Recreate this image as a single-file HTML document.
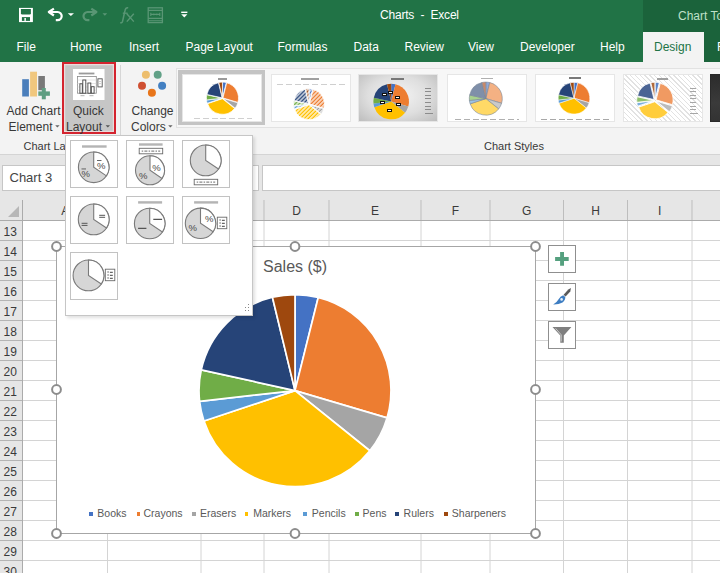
<!DOCTYPE html>
<html><head><meta charset="utf-8">
<style>
*{margin:0;padding:0;box-sizing:border-box}
html,body{width:720px;height:573px;overflow:hidden;background:#fff;font-family:"Liberation Sans",sans-serif}
.a{position:absolute}
.t{position:absolute;white-space:nowrap;line-height:1}
.tt{color:#fff;font-size:12px}
.rl{color:#383838;font-size:12px}
.hd{color:#3a3a3a;font-size:12px}
.lg{color:#595959;font-size:10.5px}
svg{position:absolute;overflow:visible}
</style></head><body>

<div class="a" style="left:0;top:0;width:720px;height:62px;background:#217346"></div>
<div class="a" style="left:643px;top:0;width:77px;height:62px;background:#1b633b"></div>
<div class="a" style="left:643px;top:32px;width:61px;height:30px;background:#f3f3f3"></div>
<div class="t tt" style="left:380px;top:9px;font-size:12px;letter-spacing:-0.2px">Charts&nbsp; -&nbsp; Excel</div>
<div class="t tt" style="left:678px;top:10px;color:#bfe0c9">Chart Tools</div>
<div class="t tt" style="left:16.5px;top:41px">File</div>
<div class="t tt" style="left:70px;top:41px">Home</div>
<div class="t tt" style="left:129px;top:41px">Insert</div>
<div class="t tt" style="left:185.5px;top:41px">Page Layout</div>
<div class="t tt" style="left:277.5px;top:41px">Formulas</div>
<div class="t tt" style="left:353.5px;top:41px">Data</div>
<div class="t tt" style="left:404.5px;top:41px">Review</div>
<div class="t tt" style="left:468px;top:41px">View</div>
<div class="t tt" style="left:520px;top:41px">Developer</div>
<div class="t tt" style="left:600px;top:41px">Help</div>
<div class="t tt" style="left:717px;top:41px">F</div>
<div class="t tt" style="left:654px;top:41px;color:#217346">Design</div>
<svg style="left:0;top:0" width="200" height="30">
<rect x="19" y="7.9" width="13.9" height="14.2" fill="#fff"/>
<path d="M20.9 9H30.9V13.2Q30.9 14.6 29.5 14.6H22.3Q20.9 14.6 20.9 13.2Z" fill="#217346"/>
<rect x="21.9" y="17.1" width="8.1" height="3.8" fill="#217346"/>
<rect x="24.4" y="18" width="1.5" height="2.9" fill="#fff"/>
<path d="M53.9 8.6 L48.8 12 L53.9 15.5" fill="none" stroke="#fff" stroke-width="2.2" stroke-linejoin="round"/>
<path d="M49.2 12 H57.6 A4.1 4.1 0 0 1 57.6 20.2 H55.8" fill="none" stroke="#fff" stroke-width="2.2"/>
<path d="M67.8 13.2H74L70.9 15.9Z" fill="#fff"/>
<g opacity="0.25">
<path d="M91.3 8.6 L96.4 12 L91.3 15.5" fill="none" stroke="#fff" stroke-width="2.2" stroke-linejoin="round"/>
<path d="M96 12 H87.6 A4.1 4.1 0 0 0 87.6 20.2 H89.4" fill="none" stroke="#fff" stroke-width="2.2"/>
<path d="M102.5 13.2H107.2L104.85 15.8Z" fill="#fff"/>
<path d="M128.2 7.8Q125.6 7.4 125 10.5L122.6 21.2Q122.1 23.2 120.2 22.6" fill="none" stroke="#fff" stroke-width="1.5"/>
<path d="M122.8 13.2H127.6" stroke="#fff" stroke-width="1.3"/>
<path d="M126.8 13.8L133.8 21.6M133.8 13.8L126.8 21.6" stroke="#fff" stroke-width="1.4"/>
<rect x="148.2" y="7.8" width="14.2" height="14.8" fill="none" stroke="#fff" stroke-width="1.3"/>
<path d="M148.2 10.4H162.4M148.2 18.4H162.4M148.2 20.7H162.4M150.8 14.4H159.8M150.8 12.8V16M159.8 12.8V16M153.8 13.6V15.2M156.8 13.6V15.2" stroke="#fff" stroke-width="1.1"/>
</g>
<rect x="181.2" y="11.6" width="6.2" height="1.4" fill="#fff"/>
<path d="M181.2 14.2H187.4L184.3 17.4Z" fill="#fff"/>
</svg>
<div class="a" style="left:0;top:62px;width:720px;height:92px;background:#f3f3f3"></div>
<div class="a" style="left:0;top:154px;width:720px;height:66px;background:#e6e6e6"></div>
<div class="a" style="left:120px;top:65px;width:1px;height:70px;background:#d6d6d6"></div>
<svg style="left:0;top:62px" width="60" height="40">
<rect x="22.2" y="17.2" width="6.7" height="17.3" fill="#4a7ebb"/>
<rect x="30.1" y="9.7" width="6.9" height="24.8" fill="#f0c77e"/>
<rect x="38.3" y="14" width="6.6" height="14.2" fill="#787878"/>
<rect x="41.8" y="26" width="4" height="11.3" fill="#5f9e82"/>
<rect x="38.3" y="29.4" width="11.6" height="4.4" fill="#5f9e82"/>
</svg>
<div class="t rl" style="left:6.5px;top:105px">Add Chart</div>
<div class="t rl" style="left:8.5px;top:121px">Element</div>
<div class="t rl" style="left:23.5px;top:141px;font-size:11px">Chart La</div>
<div class="a" style="left:62px;top:62px;width:54px;height:72px;background:#c6c6c6;border:2.7px solid #d4242f;box-shadow:inset 0 0 0 1.2px #e9dcdc"></div>
<svg style="left:72.5px;top:68.5px" width="31.5" height="31">
<rect x="0" y="0" width="31.5" height="31" fill="#fff"/>
<rect x="5.7" y="3.6" width="15.7" height="1.8" fill="#9a9a9a"/>
<rect x="4.5" y="7.5" width="18.8" height="16.7" fill="none" stroke="#8a8a8a" stroke-width="0.8"/>
<path d="M4.5 11H23.3M4.5 14.5H23.3M4.5 18H23.3M4.5 21.2H23.3" stroke="#d6d6d6" stroke-width="0.6"/>
<g fill="#fff" stroke="#444" stroke-width="0.9">
<rect x="6.9" y="14.8" width="2.4" height="9.4"/><rect x="9.8" y="11" width="3" height="13.2"/><rect x="14.9" y="14" width="2.9" height="10.2"/><rect x="18.3" y="17.7" width="2.8" height="6.5"/>
</g>
<rect x="24.9" y="9.8" width="4.3" height="8.1" fill="#fff" stroke="#555" stroke-width="0.9"/>
<path d="M27 12V12.8M27 14.3V15.1" stroke="#777" stroke-width="0.9"/>
<path d="M7.5 26.7H11.5M16.5 26.7H20.5" stroke="#aaa" stroke-width="0.9"/>
</svg>
<div class="t rl" style="left:73px;top:105px">Quick</div>
<div class="t rl" style="left:66px;top:121px">Layout</div>
<svg style="left:0;top:0" width="200" height="140">
<circle cx="145.9" cy="74.8" r="4" fill="#edbe6d"/>
<circle cx="157.7" cy="74.8" r="4" fill="#62a187"/>
<circle cx="142" cy="85.8" r="4" fill="#cf4f31"/>
<circle cx="162.1" cy="85.8" r="4" fill="#4380c2"/>
<circle cx="151.9" cy="92.7" r="4" fill="#e8751a"/>
</svg>
<div class="t rl" style="left:131.5px;top:105px">Change</div>
<div class="t rl" style="left:131px;top:121px">Colors</div>
<svg style="left:0;top:0" width="200" height="140"><path d="M55.2 125.2H59.6L57.4 127.6Z" fill="#666"/><path d="M105.6 125.2H110L107.8 127.6Z" fill="#555"/><path d="M168.2 125.2H172.6L170.4 127.6Z" fill="#666"/></svg>
<div class="t rl" style="left:484px;top:141px;font-size:11px">Chart Styles</div>
<div class="a" style="left:176px;top:67.5px;width:544px;height:60px;background:#f7f7f7;border:1px solid #e2e2e2;border-right:none"></div>
<div class="a" style="left:177.5px;top:70px;width:87px;height:55px;background:#c4c4c4"></div>
<div class="a" style="left:182px;top:73.5px;width:80px;height:48px;background:#fff;border:1px solid #e6e6e6"></div>
<svg style="left:0;top:0" width="720" height="140"><path d="M222.56,97.70L222.56,82.10A15.6,15.6 0 0 1 226.33,82.57Z" fill="#4472C4" stroke="#fff" stroke-width="0.7" stroke-linejoin="round"/><path d="M222.93,97.95L226.71,82.82A15.6,15.6 0 0 1 237.89,102.38Z" fill="#ED7D31" stroke="#fff" stroke-width="0.7" stroke-linejoin="round"/><path d="M222.94,98.43L237.90,102.86A15.6,15.6 0 0 1 235.10,108.21Z" fill="#A5A5A5" stroke="#fff" stroke-width="0.7" stroke-linejoin="round"/><path d="M222.41,98.69L234.57,108.47A15.6,15.6 0 0 1 207.62,103.64Z" fill="#FFC000" stroke="#fff" stroke-width="0.7" stroke-linejoin="round"/><path d="M222.01,98.31L207.22,103.26A15.6,15.6 0 0 1 206.51,100.05Z" fill="#5B9BD5" stroke="#fff" stroke-width="0.7" stroke-linejoin="round"/><path d="M222.00,98.17L206.50,99.91A15.6,15.6 0 0 1 206.77,94.80Z" fill="#70AD47" stroke="#fff" stroke-width="0.7" stroke-linejoin="round"/><path d="M222.14,97.85L206.91,94.47A15.6,15.6 0 0 1 218.47,82.69Z" fill="#264478" stroke="#fff" stroke-width="0.7" stroke-linejoin="round"/><path d="M222.44,97.70L218.77,82.54A15.6,15.6 0 0 1 222.44,82.10Z" fill="#9E480E" stroke="#fff" stroke-width="0.7" stroke-linejoin="round"/></svg>
<div class="a" style="left:194px;top:118.0px;width:58px;height:1px;background:repeating-linear-gradient(90deg,#d0d0d0 0 6px,transparent 6px 8.8px)"></div>
<div class="a" style="left:218px;top:77.5px;width:9px;height:2px;background:#9a9a9a"></div>
<div class="a" style="left:270.5px;top:73.5px;width:80px;height:48px;background:#fff;border:1px solid #e6e6e6"></div>
<svg style="left:0;top:0" width="720" height="140"><defs><pattern id="hp" width="2.8" height="2.8" patternUnits="userSpaceOnUse" patternTransform="rotate(45)"><rect width="1.5" height="2.8" fill="#fff"/></pattern></defs><path d="M309.06,103.70L309.06,88.70A15,15 0 0 1 312.69,89.15Z" fill="#4472C4" stroke="#fff" stroke-width="0.8" stroke-linejoin="round"/><path d="M309.43,103.95L313.06,89.40A15,15 0 0 1 323.82,108.21Z" fill="#ED7D31" stroke="#fff" stroke-width="0.8" stroke-linejoin="round"/><path d="M309.44,104.43L323.83,108.69A15,15 0 0 1 321.13,113.83Z" fill="#A5A5A5" stroke="#fff" stroke-width="0.8" stroke-linejoin="round"/><path d="M308.91,104.69L320.60,114.09A15,15 0 0 1 294.69,109.45Z" fill="#FFC000" stroke="#fff" stroke-width="0.8" stroke-linejoin="round"/><path d="M308.51,104.31L294.29,109.07A15,15 0 0 1 293.61,105.98Z" fill="#5B9BD5" stroke="#fff" stroke-width="0.8" stroke-linejoin="round"/><path d="M308.50,104.17L293.59,105.85A15,15 0 0 1 293.86,100.93Z" fill="#70AD47" stroke="#fff" stroke-width="0.8" stroke-linejoin="round"/><path d="M308.64,103.85L294.00,100.60A15,15 0 0 1 305.12,89.27Z" fill="#264478" stroke="#fff" stroke-width="0.8" stroke-linejoin="round"/><path d="M308.94,103.70L305.41,89.12A15,15 0 0 1 308.94,88.70Z" fill="#9E480E" stroke="#fff" stroke-width="0.8" stroke-linejoin="round"/><circle cx="309" cy="104.2" r="16" fill="url(#hp)" opacity="0.8"/></svg>
<div class="a" style="left:276.5px;top:83.5px;width:70.0px;height:1px;background:repeating-linear-gradient(90deg,#cfcfcf 0 6px,transparent 6px 8.8px)"></div>
<div class="a" style="left:301.0px;top:77.5px;width:18px;height:2px;background:#a0a0a0"></div>
<div class="a" style="left:358px;top:73.5px;width:80px;height:48px;background:radial-gradient(ellipse at 50% 45%,#f4f4f4 0%,#dedede 55%,#bdbdbd 100%);border:1px solid #e6e6e6"></div>
<svg style="left:0;top:0" width="720" height="140"><path d="M391.20,101.50L391.20,83.70A17.8,17.8 0 0 1 395.51,84.23Z" fill="#4472C4"/><path d="M391.20,101.50L395.51,84.23A17.8,17.8 0 0 1 408.27,106.56Z" fill="#ED7D31"/><path d="M391.20,101.50L408.27,106.56A17.8,17.8 0 0 1 405.07,112.65Z" fill="#A5A5A5"/><path d="M391.20,101.50L405.07,112.65A17.8,17.8 0 0 1 374.32,107.15Z" fill="#FFC000"/><path d="M391.20,101.50L374.32,107.15A17.8,17.8 0 0 1 373.51,103.48Z" fill="#5B9BD5"/><path d="M391.20,101.50L373.51,103.48A17.8,17.8 0 0 1 373.82,97.65Z" fill="#70AD47"/><path d="M391.20,101.50L373.82,97.65A17.8,17.8 0 0 1 387.01,84.20Z" fill="#264478"/><path d="M391.20,101.50L387.01,84.20A17.8,17.8 0 0 1 391.20,83.70Z" fill="#9E480E"/></svg>
<div class="a" style="left:425px;top:87.5px;width:6px;height:1px;background:#8c8c8c"></div>
<div class="a" style="left:425px;top:91.1px;width:6px;height:1px;background:#8c8c8c"></div>
<div class="a" style="left:425px;top:94.7px;width:6px;height:1px;background:#8c8c8c"></div>
<div class="a" style="left:425px;top:98.3px;width:6px;height:1px;background:#8c8c8c"></div>
<div class="a" style="left:425px;top:101.9px;width:6px;height:1px;background:#8c8c8c"></div>
<div class="a" style="left:425px;top:105.5px;width:6px;height:1px;background:#8c8c8c"></div>
<div class="a" style="left:425px;top:109.1px;width:6px;height:1px;background:#8c8c8c"></div>
<div class="a" style="left:425px;top:112.7px;width:8px;height:1px;background:#8c8c8c"></div>
<div class="a" style="left:381.5px;top:93.4px;width:5px;height:3px;background:#fff;border:0.7px solid #111"></div>
<div class="a" style="left:387.7px;top:90.9px;width:5px;height:3px;background:#fff;border:0.7px solid #111"></div>
<div class="a" style="left:395.2px;top:95.5px;width:5px;height:3px;background:#fff;border:0.7px solid #111"></div>
<div class="a" style="left:379.59999999999997px;top:100.9px;width:5px;height:3px;background:#fff;border:0.7px solid #111"></div>
<div class="a" style="left:395.9px;top:103.4px;width:5px;height:3px;background:#fff;border:0.7px solid #111"></div>
<div class="a" style="left:386.5px;top:109.0px;width:5px;height:3px;background:#fff;border:0.7px solid #111"></div>
<div class="a" style="left:391px;top:78.0px;width:13px;height:2px;background:#777"></div>
<div class="a" style="left:446.5px;top:73.5px;width:80px;height:48px;background:#fff;border:1px solid #e6e6e6"></div>
<svg style="left:0;top:0" width="720" height="140"><path d="M485.80,98.60L485.80,82.10A16.5,16.5 0 0 1 489.79,82.59Z" fill="#8fa9d9" stroke="#7a8797" stroke-width="0.6" stroke-linejoin="round"/><path d="M485.80,98.60L489.79,82.59A16.5,16.5 0 0 1 501.62,103.29Z" fill="#f4b183" stroke="#7a8797" stroke-width="0.6" stroke-linejoin="round"/><path d="M485.80,98.60L501.62,103.29A16.5,16.5 0 0 1 498.66,108.94Z" fill="#c9c9c9" stroke="#7a8797" stroke-width="0.6" stroke-linejoin="round"/><path d="M485.80,98.60L498.66,108.94A16.5,16.5 0 0 1 470.15,103.84Z" fill="#ffd966" stroke="#7a8797" stroke-width="0.6" stroke-linejoin="round"/><path d="M485.80,98.60L470.15,103.84A16.5,16.5 0 0 1 469.40,100.44Z" fill="#9dc3e6" stroke="#7a8797" stroke-width="0.6" stroke-linejoin="round"/><path d="M485.80,98.60L469.40,100.44A16.5,16.5 0 0 1 469.69,95.03Z" fill="#a9d18e" stroke="#7a8797" stroke-width="0.6" stroke-linejoin="round"/><path d="M485.80,98.60L469.69,95.03A16.5,16.5 0 0 1 481.92,82.56Z" fill="#7f8fa9" stroke="#7a8797" stroke-width="0.6" stroke-linejoin="round"/><path d="M485.80,98.60L481.92,82.56A16.5,16.5 0 0 1 485.80,82.10Z" fill="#c9896a" stroke="#7a8797" stroke-width="0.6" stroke-linejoin="round"/></svg>
<div class="a" style="left:454.5px;top:118.5px;width:64.0px;height:1.2px;background:repeating-linear-gradient(90deg,#b0b0b0 0 6px,transparent 6px 8.8px)"></div>
<div class="a" style="left:480.5px;top:77.5px;width:12px;height:1.8px;background:#b0b0b0"></div>
<div class="a" style="left:534.5px;top:73.5px;width:80px;height:48px;background:#fff;border:1px solid #e6e6e6"></div>
<svg style="left:0;top:0" width="720" height="140"><path d="M574.00,98.20L574.00,82.40A15.8,15.8 0 0 1 577.82,82.87Z" fill="#4472C4" stroke="#fff" stroke-width="0.5" stroke-linejoin="round"/><path d="M574.00,98.20L577.82,82.87A15.8,15.8 0 0 1 589.15,102.69Z" fill="#ED7D31" stroke="#fff" stroke-width="0.5" stroke-linejoin="round"/><path d="M574.00,98.20L589.15,102.69A15.8,15.8 0 0 1 586.31,108.10Z" fill="#A5A5A5" stroke="#fff" stroke-width="0.5" stroke-linejoin="round"/><path d="M574.00,98.20L586.31,108.10A15.8,15.8 0 0 1 559.02,103.21Z" fill="#FFC000" stroke="#fff" stroke-width="0.5" stroke-linejoin="round"/><path d="M574.00,98.20L559.02,103.21A15.8,15.8 0 0 1 558.30,99.96Z" fill="#5B9BD5" stroke="#fff" stroke-width="0.5" stroke-linejoin="round"/><path d="M574.00,98.20L558.30,99.96A15.8,15.8 0 0 1 558.57,94.78Z" fill="#70AD47" stroke="#fff" stroke-width="0.5" stroke-linejoin="round"/><path d="M574.00,98.20L558.57,94.78A15.8,15.8 0 0 1 570.28,82.84Z" fill="#264478" stroke="#fff" stroke-width="0.5" stroke-linejoin="round"/><path d="M574.00,98.20L570.28,82.84A15.8,15.8 0 0 1 574.00,82.40Z" fill="#9E480E" stroke="#fff" stroke-width="0.5" stroke-linejoin="round"/></svg>
<div class="a" style="left:540.5px;top:118.5px;width:70.0px;height:1px;background:repeating-linear-gradient(90deg,#a8a8a8 0 6px,transparent 6px 8.8px)"></div>
<div class="a" style="left:568.5px;top:77.0px;width:12px;height:2.2px;background:#7a7a7a"></div>
<div class="a" style="left:622.5px;top:73.5px;width:80px;height:48px;background:repeating-linear-gradient(45deg,#fff 0,#fff 2.4px,#e2e2e2 2.4px,#e2e2e2 3.4px);border:1px solid #e6e6e6"></div>
<svg style="left:0;top:0" width="720" height="140"><path d="M655.16,99.21L655.16,82.21A17,17 0 0 1 659.27,82.71Z" fill="#5d86c9" stroke="#fff" stroke-width="0.8" stroke-linejoin="round"/><path d="M656.13,99.85L660.24,83.36A17,17 0 0 1 672.43,104.68Z" fill="#f09a62" stroke="#fff" stroke-width="0.8" stroke-linejoin="round"/><path d="M656.15,101.10L672.45,105.93A17,17 0 0 1 669.40,111.76Z" fill="#bcbcbc" stroke="#fff" stroke-width="0.8" stroke-linejoin="round"/><path d="M654.77,101.78L668.02,112.43A17,17 0 0 1 638.65,107.17Z" fill="#ffcd3c" stroke="#fff" stroke-width="0.8" stroke-linejoin="round"/><path d="M653.73,100.78L637.61,106.17A17,17 0 0 1 636.84,102.68Z" fill="#7db0de" stroke="#fff" stroke-width="0.8" stroke-linejoin="round"/><path d="M653.70,100.43L636.81,102.33A17,17 0 0 1 637.10,96.75Z" fill="#8fc06b" stroke="#fff" stroke-width="0.8" stroke-linejoin="round"/><path d="M654.07,99.59L637.47,95.91A17,17 0 0 1 650.07,83.07Z" fill="#4b6494" stroke="#fff" stroke-width="0.8" stroke-linejoin="round"/><path d="M654.85,99.21L650.85,82.69A17,17 0 0 1 654.85,82.21Z" fill="#b06a3c" stroke="#fff" stroke-width="0.8" stroke-linejoin="round"/></svg>
<div class="a" style="left:689.5px;top:87.5px;width:6px;height:1px;background:#a6a6a6"></div>
<div class="a" style="left:689.5px;top:91.1px;width:6px;height:1px;background:#a6a6a6"></div>
<div class="a" style="left:689.5px;top:94.7px;width:6px;height:1px;background:#a6a6a6"></div>
<div class="a" style="left:689.5px;top:98.3px;width:6px;height:1px;background:#a6a6a6"></div>
<div class="a" style="left:689.5px;top:101.9px;width:6px;height:1px;background:#a6a6a6"></div>
<div class="a" style="left:689.5px;top:105.5px;width:6px;height:1px;background:#a6a6a6"></div>
<div class="a" style="left:689.5px;top:109.1px;width:6px;height:1px;background:#a6a6a6"></div>
<div class="a" style="left:689.5px;top:112.7px;width:8px;height:1px;background:#a6a6a6"></div>
<div class="a" style="left:656.5px;top:77.5px;width:11px;height:2px;background:#a0a0a0"></div>
<div class="a" style="left:709.5px;top:73.5px;width:80px;height:48px;background:linear-gradient(180deg,#2c2c2c,#3a3a3a 60%,#333);border:1px solid #2a2a2a"></div>
<div class="a" style="left:0;top:154px;width:720px;height:1px;background:#d4d4d4"></div>
<div class="a" style="left:2px;top:165px;width:257px;height:26px;background:#fff;border:1px solid #c6c6c6"></div>
<div class="t" style="left:9.5px;top:171px;font-size:13px;color:#444">Chart 3</div>
<div class="a" style="left:262px;top:165px;width:460px;height:26px;background:#fff;border:1px solid #c6c6c6"></div>
<div class="a" style="left:0;top:200px;width:720px;height:20px;background:#e6e6e6"></div>
<div class="a" style="left:0;top:220px;width:22px;height:353px;background:#e6e6e6"></div>
<div class="a" style="left:22px;top:200px;width:1px;height:373px;background:#ababab"></div>
<div class="a" style="left:0;top:220px;width:720px;height:1px;background:#ababab"></div>
<svg style="left:0;top:0" width="30" height="230"><path d="M19 206V217H8Z" fill="#b7b7b7"/></svg>
<svg style="left:0;top:0" width="720" height="573"><line x1="107.5" y1="221" x2="107.5" y2="573" stroke="#d4d4d4" stroke-width="1"/><line x1="107.5" y1="200" x2="107.5" y2="220" stroke="#bdbdbd" stroke-width="1"/><line x1="201" y1="221" x2="201" y2="573" stroke="#d4d4d4" stroke-width="1"/><line x1="201" y1="200" x2="201" y2="220" stroke="#bdbdbd" stroke-width="1"/><line x1="264" y1="221" x2="264" y2="573" stroke="#d4d4d4" stroke-width="1"/><line x1="264" y1="200" x2="264" y2="220" stroke="#bdbdbd" stroke-width="1"/><line x1="329" y1="221" x2="329" y2="573" stroke="#d4d4d4" stroke-width="1"/><line x1="329" y1="200" x2="329" y2="220" stroke="#bdbdbd" stroke-width="1"/><line x1="421" y1="221" x2="421" y2="573" stroke="#d4d4d4" stroke-width="1"/><line x1="421" y1="200" x2="421" y2="220" stroke="#bdbdbd" stroke-width="1"/><line x1="490" y1="221" x2="490" y2="573" stroke="#d4d4d4" stroke-width="1"/><line x1="490" y1="200" x2="490" y2="220" stroke="#bdbdbd" stroke-width="1"/><line x1="563.5" y1="221" x2="563.5" y2="573" stroke="#d4d4d4" stroke-width="1"/><line x1="563.5" y1="200" x2="563.5" y2="220" stroke="#bdbdbd" stroke-width="1"/><line x1="627.5" y1="221" x2="627.5" y2="573" stroke="#d4d4d4" stroke-width="1"/><line x1="627.5" y1="200" x2="627.5" y2="220" stroke="#bdbdbd" stroke-width="1"/><line x1="692" y1="221" x2="692" y2="573" stroke="#d4d4d4" stroke-width="1"/><line x1="692" y1="200" x2="692" y2="220" stroke="#bdbdbd" stroke-width="1"/><line x1="23" y1="240.5" x2="720" y2="240.5" stroke="#d4d4d4" stroke-width="1"/><line x1="0" y1="240.5" x2="22" y2="240.5" stroke="#b4b4b4" stroke-width="1"/><line x1="23" y1="260.5" x2="720" y2="260.5" stroke="#d4d4d4" stroke-width="1"/><line x1="0" y1="260.5" x2="22" y2="260.5" stroke="#b4b4b4" stroke-width="1"/><line x1="23" y1="280.5" x2="720" y2="280.5" stroke="#d4d4d4" stroke-width="1"/><line x1="0" y1="280.5" x2="22" y2="280.5" stroke="#b4b4b4" stroke-width="1"/><line x1="23" y1="300.5" x2="720" y2="300.5" stroke="#d4d4d4" stroke-width="1"/><line x1="0" y1="300.5" x2="22" y2="300.5" stroke="#b4b4b4" stroke-width="1"/><line x1="23" y1="320.5" x2="720" y2="320.5" stroke="#d4d4d4" stroke-width="1"/><line x1="0" y1="320.5" x2="22" y2="320.5" stroke="#b4b4b4" stroke-width="1"/><line x1="23" y1="340.5" x2="720" y2="340.5" stroke="#d4d4d4" stroke-width="1"/><line x1="0" y1="340.5" x2="22" y2="340.5" stroke="#b4b4b4" stroke-width="1"/><line x1="23" y1="360.5" x2="720" y2="360.5" stroke="#d4d4d4" stroke-width="1"/><line x1="0" y1="360.5" x2="22" y2="360.5" stroke="#b4b4b4" stroke-width="1"/><line x1="23" y1="380.5" x2="720" y2="380.5" stroke="#d4d4d4" stroke-width="1"/><line x1="0" y1="380.5" x2="22" y2="380.5" stroke="#b4b4b4" stroke-width="1"/><line x1="23" y1="400.5" x2="720" y2="400.5" stroke="#d4d4d4" stroke-width="1"/><line x1="0" y1="400.5" x2="22" y2="400.5" stroke="#b4b4b4" stroke-width="1"/><line x1="23" y1="420.5" x2="720" y2="420.5" stroke="#d4d4d4" stroke-width="1"/><line x1="0" y1="420.5" x2="22" y2="420.5" stroke="#b4b4b4" stroke-width="1"/><line x1="23" y1="440.5" x2="720" y2="440.5" stroke="#d4d4d4" stroke-width="1"/><line x1="0" y1="440.5" x2="22" y2="440.5" stroke="#b4b4b4" stroke-width="1"/><line x1="23" y1="460.5" x2="720" y2="460.5" stroke="#d4d4d4" stroke-width="1"/><line x1="0" y1="460.5" x2="22" y2="460.5" stroke="#b4b4b4" stroke-width="1"/><line x1="23" y1="480.5" x2="720" y2="480.5" stroke="#d4d4d4" stroke-width="1"/><line x1="0" y1="480.5" x2="22" y2="480.5" stroke="#b4b4b4" stroke-width="1"/><line x1="23" y1="500.5" x2="720" y2="500.5" stroke="#d4d4d4" stroke-width="1"/><line x1="0" y1="500.5" x2="22" y2="500.5" stroke="#b4b4b4" stroke-width="1"/><line x1="23" y1="520.5" x2="720" y2="520.5" stroke="#d4d4d4" stroke-width="1"/><line x1="0" y1="520.5" x2="22" y2="520.5" stroke="#b4b4b4" stroke-width="1"/><line x1="23" y1="540.5" x2="720" y2="540.5" stroke="#d4d4d4" stroke-width="1"/><line x1="0" y1="540.5" x2="22" y2="540.5" stroke="#b4b4b4" stroke-width="1"/><line x1="23" y1="560.5" x2="720" y2="560.5" stroke="#d4d4d4" stroke-width="1"/><line x1="0" y1="560.5" x2="22" y2="560.5" stroke="#b4b4b4" stroke-width="1"/></svg>
<div class="t hd" style="left:23px;width:84.5px;text-align:center;top:205px">A</div>
<div class="t hd" style="left:107.5px;width:93.5px;text-align:center;top:205px">B</div>
<div class="t hd" style="left:201px;width:63px;text-align:center;top:205px">C</div>
<div class="t hd" style="left:264px;width:65px;text-align:center;top:205px">D</div>
<div class="t hd" style="left:329px;width:92px;text-align:center;top:205px">E</div>
<div class="t hd" style="left:421px;width:69px;text-align:center;top:205px">F</div>
<div class="t hd" style="left:490px;width:73.5px;text-align:center;top:205px">G</div>
<div class="t hd" style="left:563.5px;width:64.0px;text-align:center;top:205px">H</div>
<div class="t hd" style="left:627.5px;width:64.5px;text-align:center;top:205px">I</div>
<div class="t hd" style="left:692px;width:68px;text-align:center;top:205px">J</div>
<div class="t hd" style="left:3.5px;top:226px">13</div>
<div class="t hd" style="left:3.5px;top:246px">14</div>
<div class="t hd" style="left:3.5px;top:266px">15</div>
<div class="t hd" style="left:3.5px;top:286px">16</div>
<div class="t hd" style="left:3.5px;top:306px">17</div>
<div class="t hd" style="left:3.5px;top:326px">18</div>
<div class="t hd" style="left:3.5px;top:346px">19</div>
<div class="t hd" style="left:3.5px;top:366px">20</div>
<div class="t hd" style="left:3.5px;top:386px">21</div>
<div class="t hd" style="left:3.5px;top:406px">22</div>
<div class="t hd" style="left:3.5px;top:426px">23</div>
<div class="t hd" style="left:3.5px;top:446px">24</div>
<div class="t hd" style="left:3.5px;top:466px">25</div>
<div class="t hd" style="left:3.5px;top:486px">26</div>
<div class="t hd" style="left:3.5px;top:506px">27</div>
<div class="t hd" style="left:3.5px;top:526px">28</div>
<div class="t hd" style="left:3.5px;top:546px">29</div>
<div class="t hd" style="left:3.5px;top:566px">30</div>
<div class="a" style="left:56px;top:246px;width:479.5px;height:287.5px;background:#fff;border:1px solid #a6a6a6"></div>
<div class="t" style="left:263px;top:259px;font-size:16px;color:#595959">Sales ($)</div>
<svg style="left:0;top:0" width="720" height="573"><path d="M295.00,390.60L295.00,294.60A96,96 0 0 1 318.22,297.45Z" fill="#4472C4" stroke="#fff" stroke-width="1.7" stroke-linejoin="round"/><path d="M295.00,390.60L318.22,297.45A96,96 0 0 1 387.05,417.87Z" fill="#ED7D31" stroke="#fff" stroke-width="1.7" stroke-linejoin="round"/><path d="M295.00,390.60L387.05,417.87A96,96 0 0 1 369.82,450.75Z" fill="#A5A5A5" stroke="#fff" stroke-width="1.7" stroke-linejoin="round"/><path d="M295.00,390.60L369.82,450.75A96,96 0 0 1 203.96,421.06Z" fill="#FFC000" stroke="#fff" stroke-width="1.7" stroke-linejoin="round"/><path d="M295.00,390.60L203.96,421.06A96,96 0 0 1 199.60,401.30Z" fill="#5B9BD5" stroke="#fff" stroke-width="1.7" stroke-linejoin="round"/><path d="M295.00,390.60L199.60,401.30A96,96 0 0 1 201.28,369.82Z" fill="#70AD47" stroke="#fff" stroke-width="1.7" stroke-linejoin="round"/><path d="M295.00,390.60L201.28,369.82A96,96 0 0 1 272.43,297.29Z" fill="#264478" stroke="#fff" stroke-width="1.7" stroke-linejoin="round"/><path d="M295.00,390.60L272.43,297.29A96,96 0 0 1 295.00,294.60Z" fill="#9E480E" stroke="#fff" stroke-width="1.7" stroke-linejoin="round"/></svg>
<div class="a" style="left:89.2px;top:512px;width:3.6px;height:3.6px;background:#4472C4"></div>
<div class="t lg" style="left:97.3px;top:507.5px">Books</div>
<div class="a" style="left:136.7px;top:512px;width:3.6px;height:3.6px;background:#ED7D31"></div>
<div class="t lg" style="left:143.5px;top:507.5px">Crayons</div>
<div class="a" style="left:192px;top:512px;width:3.6px;height:3.6px;background:#A5A5A5"></div>
<div class="t lg" style="left:200px;top:507.5px">Erasers</div>
<div class="a" style="left:244.7px;top:512px;width:3.6px;height:3.6px;background:#FFC000"></div>
<div class="t lg" style="left:253.2px;top:507.5px">Markers</div>
<div class="a" style="left:303.3px;top:512px;width:3.6px;height:3.6px;background:#5B9BD5"></div>
<div class="t lg" style="left:311.8px;top:507.5px">Pencils</div>
<div class="a" style="left:355px;top:512px;width:3.6px;height:3.6px;background:#70AD47"></div>
<div class="t lg" style="left:362.6px;top:507.5px">Pens</div>
<div class="a" style="left:395.3px;top:512px;width:3.6px;height:3.6px;background:#264478"></div>
<div class="t lg" style="left:403.6px;top:507.5px">Rulers</div>
<div class="a" style="left:444.2px;top:512px;width:3.6px;height:3.6px;background:#9E480E"></div>
<div class="t lg" style="left:451.8px;top:507.5px">Sharpeners</div>
<svg style="left:0;top:0" width="720" height="573"><circle cx="56.5" cy="246.5" r="4.4" fill="#fff" stroke="#8c8c8c" stroke-width="2"/><circle cx="295" cy="246.5" r="4.4" fill="#fff" stroke="#8c8c8c" stroke-width="2"/><circle cx="535.5" cy="246.5" r="4.4" fill="#fff" stroke="#8c8c8c" stroke-width="2"/><circle cx="56.5" cy="389.5" r="4.4" fill="#fff" stroke="#8c8c8c" stroke-width="2"/><circle cx="535.5" cy="389.5" r="4.4" fill="#fff" stroke="#8c8c8c" stroke-width="2"/><circle cx="56.5" cy="533.5" r="4.4" fill="#fff" stroke="#8c8c8c" stroke-width="2"/><circle cx="295" cy="533.5" r="4.4" fill="#fff" stroke="#8c8c8c" stroke-width="2"/><circle cx="535.5" cy="533.5" r="4.4" fill="#fff" stroke="#8c8c8c" stroke-width="2"/></svg>
<div class="a" style="left:548px;top:245px;width:27.5px;height:27.5px;background:#fff;border:1px solid #8f8f8f"></div>
<div class="a" style="left:548px;top:283px;width:27.5px;height:27.5px;background:#fff;border:1px solid #8f8f8f"></div>
<div class="a" style="left:548px;top:321px;width:27.5px;height:27.5px;background:#fff;border:1px solid #8f8f8f"></div>
<svg style="left:548px;top:245px" width="28" height="110">
<path d="M12.1 7.1h3.9v5h4.7v3.9h-4.7v4.7h-3.9v-4.7h-5v-3.9h5z" fill="#55a07f"/>
<path d="M22.9 43.1 L22.3 46.5 L17.6 51.6 L15.6 49.8 L20.3 44.6Z" fill="#5a5a5a"/>
<path d="M15.2 50.2 L17.3 52.1 Q17.5 55.5 14.5 57.5 Q10.5 59.8 5.2 59.6 Q8.8 57.6 10.4 54.6 Q12.3 50.8 15.2 50.2Z" fill="#3d7dc2"/>
<circle cx="13.6" cy="54.4" r="1.3" fill="#e8f0f8"/>
<path d="M4.5 82.1H23.4L15.8 90.6V97.8H12.3V90.6Z" fill="#7f7f7f"/>
<path d="M7.6 83.4L13.2 89.8V96.5" fill="none" stroke="#d0d0d0" stroke-width="0.9"/>
</svg>
<div class="a" style="left:64.5px;top:134.5px;width:188px;height:181px;background:#fff;border:1px solid #c6c6c6;box-shadow:2px 2px 3px rgba(0,0,0,0.12)"></div>
<div class="a" style="left:70px;top:140px;width:48px;height:47.5px;background:#fff;border:1px solid #c2c2c2"></div>
<div class="a" style="left:126px;top:140px;width:48px;height:47.5px;background:#fff;border:1px solid #c2c2c2"></div>
<div class="a" style="left:182px;top:140px;width:48px;height:47.5px;background:#fff;border:1px solid #c2c2c2"></div>
<div class="a" style="left:70px;top:196px;width:48px;height:47.5px;background:#fff;border:1px solid #c2c2c2"></div>
<div class="a" style="left:126px;top:196px;width:48px;height:47.5px;background:#fff;border:1px solid #c2c2c2"></div>
<div class="a" style="left:182px;top:196px;width:48px;height:47.5px;background:#fff;border:1px solid #c2c2c2"></div>
<div class="a" style="left:70px;top:252px;width:48px;height:47.5px;background:#fff;border:1px solid #c2c2c2"></div>
<svg style="left:0;top:0" width="720" height="573"><rect x="82" y="145.3" width="24.6" height="2.4" fill="#b4b4b4"/><circle cx="93.7" cy="167.3" r="15.3" fill="#d6d6d6" stroke="#7a7a7a" stroke-width="1.1"/><path d="M93.7,167.3V152.0A15.3,15.3 0 0 1 106.38,175.86Z" fill="#fff" stroke="#7a7a7a" stroke-width="1.1"/><text x="97" y="168.5" font-size="9.5" fill="#4a4a4a" font-family="Liberation Sans">%</text><rect x="97" y="160.0" width="4.5" height="0.9" fill="#555"/><text x="81.5" y="177" font-size="9.5" fill="#4a4a4a" font-family="Liberation Sans">%</text><rect x="81.5" y="168.5" width="4.5" height="0.9" fill="#555"/><rect x="139" y="143.3" width="23.6" height="2.4" fill="#b4b4b4"/><rect x="139.2" y="148.3" width="23.5" height="5.5" fill="#fff" stroke="#6a6a6a" stroke-width="0.9"/><path d="M141.7 151.05H160.2" stroke="#888" stroke-width="1.3" stroke-dasharray="1.5 1.2 3 1.2"/><circle cx="150" cy="170.3" r="14.5" fill="#d6d6d6" stroke="#7a7a7a" stroke-width="1.1"/><path d="M150,170.3V155.8A14.5,14.5 0 0 1 162.02,178.41Z" fill="#fff" stroke="#7a7a7a" stroke-width="1.1"/><text x="152.3" y="170.5" font-size="9.5" fill="#4a4a4a" font-family="Liberation Sans">%</text><text x="139" y="178.5" font-size="9.5" fill="#4a4a4a" font-family="Liberation Sans">%</text><circle cx="205.7" cy="160.4" r="15.4" fill="#d6d6d6" stroke="#7a7a7a" stroke-width="1.1"/><path d="M205.7,160.4V145.0A15.4,15.4 0 0 1 218.47,169.01Z" fill="#fff" stroke="#7a7a7a" stroke-width="1.1"/><rect x="194.2" y="179.3" width="23.5" height="5.5" fill="#fff" stroke="#6a6a6a" stroke-width="0.9"/><path d="M196.7 182.05H215.2" stroke="#888" stroke-width="1.3" stroke-dasharray="1.5 1.2 3 1.2"/><circle cx="93.7" cy="219.4" r="15.4" fill="#d6d6d6" stroke="#7a7a7a" stroke-width="1.1"/><path d="M93.7,219.4V204.0A15.4,15.4 0 0 1 106.47,228.01Z" fill="#fff" stroke="#7a7a7a" stroke-width="1.1"/><path d="M99.2 215.3H105.1M99.2 217.3H105.1M81.6 223.3H87.5M81.6 225.4H87.5" stroke="#555" stroke-width="1"/><rect x="138.1" y="201.2" width="24" height="2.4" fill="#b4b4b4"/><circle cx="149.7" cy="223.5" r="15.3" fill="#d6d6d6" stroke="#7a7a7a" stroke-width="1.1"/><path d="M149.7,223.5V208.2A15.3,15.3 0 0 1 162.38,232.06Z" fill="#fff" stroke="#7a7a7a" stroke-width="1.1"/><path d="M153.3 219.4H162.1M138.1 228.4H146.4" stroke="#555" stroke-width="1.1"/><rect x="194.1" y="201.2" width="24" height="2.4" fill="#b4b4b4"/><circle cx="200.5" cy="223.3" r="15.2" fill="#d6d6d6" stroke="#7a7a7a" stroke-width="1.1"/><path d="M200.5,223.3V208.10000000000002A15.2,15.2 0 0 1 213.10,231.80Z" fill="#fff" stroke="#7a7a7a" stroke-width="1.1"/><text x="205" y="221.8" font-size="9.5" fill="#4a4a4a" font-family="Liberation Sans">%</text><text x="188.5" y="231" font-size="9.5" fill="#4a4a4a" font-family="Liberation Sans">%</text><rect x="217.3" y="217.2" width="9.5" height="11.5" fill="#fff" stroke="#6a6a6a" stroke-width="0.9"/><path d="M219.3 220.0H220.9M221.9 220.39999999999998H224.8M219.3 223.0H220.9M221.9 223.39999999999998H224.8M219.3 226.0H220.9M221.9 226.39999999999998H224.8" stroke="#666" stroke-width="1.1"/><circle cx="88.5" cy="275.4" r="15.4" fill="#d6d6d6" stroke="#7a7a7a" stroke-width="1.1"/><path d="M88.5,275.4V260.0A15.4,15.4 0 0 1 101.27,284.01Z" fill="#fff" stroke="#7a7a7a" stroke-width="1.1"/><rect x="105.3" y="269.2" width="9.5" height="11.5" fill="#fff" stroke="#6a6a6a" stroke-width="0.9"/><path d="M107.3 272.0H108.89999999999999M109.89999999999999 272.4H112.8M107.3 275.0H108.89999999999999M109.89999999999999 275.4H112.8M107.3 278.0H108.89999999999999M109.89999999999999 278.4H112.8" stroke="#666" stroke-width="1.1"/><g fill="#888"><rect x="245" y="307" width="1" height="1"/><rect x="248" y="307" width="1" height="1"/><rect x="245" y="310" width="1" height="1"/><rect x="248" y="310" width="1" height="1"/><rect x="248" y="304" width="1" height="1"/></g></svg>
</body></html>
